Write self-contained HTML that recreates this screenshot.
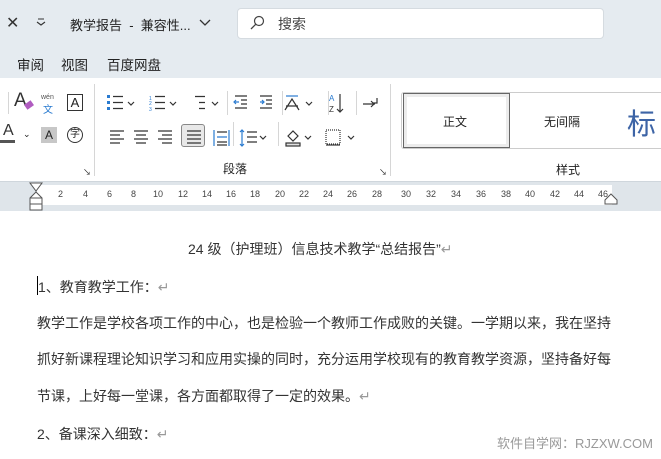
<!DOCTYPE html>
<html><head><meta charset="utf-8"><style>
*{margin:0;padding:0;box-sizing:border-box}
body{width:661px;height:459px;overflow:hidden;background:#fff;font-family:"Liberation Sans","Noto Sans CJK SC",sans-serif;position:relative;color:#222}
.a{position:absolute;white-space:nowrap}
.top{position:absolute;left:0;top:0;width:661px;height:78px;background:#e5ebf0}
.rib{position:absolute;left:0;top:78px;width:661px;height:103px;background:#fff}
.ruler{position:absolute;left:0;top:181px;width:661px;height:30px;background:#dfe5ea;border-top:1px solid #cfd6dc}
.rw{position:absolute;left:37px;top:3px;width:575px;height:20px;background:#fff}
.rn{position:absolute;top:7px;font-size:9px;color:#444}
.doc{font-size:14px;color:#333}
.ic{position:absolute;font-size:14px;color:#333}
.vs{position:absolute;width:1px;background:#d6d6d6}
</style></head><body>
<div class="top"></div>
<div class="a" style="left:6px;top:13px;font-size:16px;color:#333">✕</div>
<svg class="a" style="left:36px;top:18px" width="10" height="8" stroke="#333" stroke-width="1.1" fill="none"><path d="M2 1h6M1 4l4 3 4-3"/></svg>
<div class="a" style="left:70px;top:15px;font-size:13px;color:#222">教学报告 &nbsp;- &nbsp;兼容性...</div>
<svg class="a" style="left:199px;top:19px" width="12" height="8"><path d="M1 1 L6 6 L11 1" fill="none" stroke="#333" stroke-width="1.3"/></svg>
<div class="a" style="left:237px;top:8px;width:367px;height:31px;background:#fff;border:1px solid #d5dbe0;border-radius:4px"></div>
<svg class="a" style="left:249px;top:15px" width="16" height="16"><circle cx="10" cy="6" r="4.5" fill="none" stroke="#444" stroke-width="1.2"/><path d="M7 9 L2 14" stroke="#444" stroke-width="1.3"/></svg>
<div class="a" style="left:278px;top:14px;font-size:14px;color:#444">搜索</div>
<div class="a" style="left:17px;top:54px;font-size:13.5px">审阅</div>
<div class="a" style="left:61px;top:54px;font-size:13.5px">视图</div>
<div class="a" style="left:107px;top:54px;font-size:13.5px">百度网盘</div>
<div class="rib"></div>
<div class="vs" style="left:8px;top:92px;height:22px"></div>
<div class="ic" style="left:14px;top:90px;font-size:19px">A</div>
<div class="a" style="left:25px;top:102px;width:8px;height:6px;background:#b05cc0;transform:rotate(-35deg)"></div>
<div class="a" style="left:41px;top:94px;font-size:7px;color:#555">wén</div>
<div class="a" style="left:43px;top:101px;font-size:10px;color:#2a7bd0">文</div>
<div class="a" style="left:67px;top:94px;width:16px;height:17px;border:1px solid #333;font-size:13px;text-align:center;line-height:15px">A</div>
<div class="ic" style="left:3px;top:122px;font-size:16px">A</div>
<div class="a" style="left:0;top:140px;width:15px;height:3px;background:#555"></div>
<div class="a" style="left:23px;top:129px;font-size:9px">⌄</div>
<div class="a" style="left:41px;top:127px;width:16px;height:16px;background:#c7c7c7;font-size:12px;text-align:center;line-height:16px">A</div>
<div class="a" style="left:67px;top:127px;width:16px;height:16px;border:1px solid #333;border-radius:50%;font-size:10px;text-align:center;line-height:14px">字</div>
<div class="a" style="left:83px;top:167px;font-size:8px">↘</div>
<div class="vs" style="left:94px;top:84px;height:92px"></div>
<svg class="a" style="left:105px;top:92px" width="290" height="60" fill="none" stroke="#333" stroke-width="1.2">
<g fill="#2a7bd0" stroke="none"><rect x="2" y="3" width="3" height="3"/><rect x="2" y="9" width="3" height="3"/><rect x="2" y="15" width="3" height="3"/></g>
<path d="M8 4.5h10M8 10.5h10M8 16.5h10"/><path d="M23 10l3 3 3-3" />
<path d="M50 4.5h10M50 10.5h10M50 16.5h10"/><path d="M65 10l3 3 3-3"/>
<text x="44" y="8" font-size="5" fill="#2a7bd0" stroke="none">1</text><text x="44" y="13" font-size="5" fill="#2a7bd0" stroke="none">2</text><text x="44" y="19" font-size="5" fill="#2a7bd0" stroke="none">3</text>
<path d="M90 4.5h10M94 10.5h6M94 16.5h6"/><path d="M107 10l3 3 3-3"/>
<path d="M130 4h12M136 8h6M136 12h6M130 16h12"/><path d="M134 10h-4M131 8l-2 2 2 2" stroke="#2a7bd0"/>
<path d="M155 4h12M161 8h6M161 12h6M155 16h12"/><path d="M155 10h4M157 8l2 2-2 2" stroke="#2a7bd0"/>
<path d="M180 18l7-11 7 11M181 14h12"/><path d="M181 4h12" stroke="#2a7bd0"/><path d="M201 10l3 3 3-3"/>
<path d="M235 2v18M232 17l3 3 3-3"/>
<text x="224" y="9" font-size="8" fill="#2a7bd0" stroke="none">A</text><text x="224" y="20" font-size="8" fill="#333" stroke="none">Z</text>
<path d="M258 12h12M266 9l3 3-3 3M272 6v5h-4"/>
<path d="M5 39h14M5 43h10M5 47h14M5 51h10"/>
<path d="M29 39h14M31 43h10M29 47h14M31 51h10"/>
<path d="M53 39h14M57 43h10M53 47h14M57 51h10"/>
<path d="M109 38v16M124 38v16M112 45h10" stroke="#2a7bd0"/><path d="M112 40h10M112 50h10M112 53h10"/>
<path d="M137 38v16M135 40l2-2 2 2M135 52l2 2 2-2" stroke="#2a7bd0"/><path d="M142 40h10M142 45h10M142 50h10"/><path d="M155 44l3 3 3-3"/>
<path d="M183 44l5-5 5 5-5 5z"/><rect x="181" y="51" width="14" height="3" fill="#e0e0e0"/><path d="M200 44l3 3 3-3"/>
<path d="M221 38h14v14h-14z" stroke-dasharray="1 1"/><path d="M221 53h14"/><path d="M243 44l3 3 3-3"/>
</svg>
<div class="a" style="left:181px;top:124px;width:24px;height:23px;border:1px solid #888;border-radius:3px;background:#e8e8e8"></div>
<svg class="a" style="left:186px;top:128px" width="16" height="16" stroke="#333" stroke-width="1.2"><path d="M1 3h14M1 7h14M1 11h14M1 15h14"/></svg>
<div class="vs" style="left:227px;top:91px;height:24px"></div>
<div class="vs" style="left:282px;top:91px;height:24px"></div>
<div class="vs" style="left:328px;top:91px;height:24px"></div>
<div class="vs" style="left:356px;top:91px;height:24px"></div>
<div class="vs" style="left:233px;top:122px;height:24px"></div>
<div class="vs" style="left:278px;top:122px;height:24px"></div>
<div class="a" style="left:223px;top:160px;font-size:12px">段落</div>
<div class="a" style="left:379px;top:167px;font-size:8px">↘</div>
<div class="vs" style="left:390px;top:84px;height:92px"></div>
<div class="a" style="left:401px;top:92px;width:260px;height:57px;border:1px solid #ccc;border-right:none;border-radius:3px 0 0 3px"></div>
<div class="a" style="left:403px;top:93px;width:107px;height:55px;border:1px solid #666;background:#fff;box-shadow:inset 0 0 0 3px #ececec"></div>
<div class="a" style="left:443px;top:113px;font-size:12px">正文</div>
<div class="a" style="left:544px;top:113px;font-size:12px">无间隔</div>
<div class="a" style="left:627px;top:101px;font-size:29px;color:#3d64a6">标</div>
<div class="a" style="left:556px;top:161px;font-size:12px">样式</div>
<div class="ruler"><div class="rw"></div>
<span class="rn" style="left:58px">2</span><span class="rn" style="left:83px">4</span><span class="rn" style="left:107px">6</span><span class="rn" style="left:131px">8</span><span class="rn" style="left:153px">10</span><span class="rn" style="left:178px">12</span><span class="rn" style="left:202px">14</span><span class="rn" style="left:226px">16</span><span class="rn" style="left:250px">18</span><span class="rn" style="left:275px">20</span><span class="rn" style="left:299px">22</span><span class="rn" style="left:323px">24</span><span class="rn" style="left:347px">26</span><span class="rn" style="left:372px">28</span><span class="rn" style="left:401px">30</span><span class="rn" style="left:426px">32</span><span class="rn" style="left:451px">34</span><span class="rn" style="left:476px">36</span><span class="rn" style="left:501px">38</span><span class="rn" style="left:525px">40</span><span class="rn" style="left:550px">42</span><span class="rn" style="left:574px">44</span><span class="rn" style="left:598px">46</span>
</div>
<svg class="a" style="left:29px;top:182px" width="14" height="30" fill="#fff" stroke="#555"><path d="M1 1h12L7 9z"/><path d="M7 10l6 6v6H1v-6z"/><path d="M1 16h12"/><rect x="1" y="22" width="12" height="6"/></svg>
<svg class="a" style="left:604px;top:193px" width="14" height="12" fill="#fff" stroke="#555"><path d="M7 1l6 6v4H1V7z"/></svg>
<div class="a doc" style="left:188px;top:239px">24 级（护理班）信息技术教学“总结报告”<span style="color:#999">↵</span></div>
<div class="a" style="left:37px;top:276px;width:1px;height:19px;background:#000"></div>
<div class="a doc" style="left:38px;top:277px">1、教育教学工作：<span style="color:#999">↵</span></div>
<div class="a doc" style="left:37px;top:313px">教学工作是学校各项工作的中心，也是检验一个教师工作成败的关键。一学期以来，我在坚持</div>
<div class="a doc" style="left:37px;top:349px">抓好新课程理论知识学习和应用实操的同时，充分运用学校现有的教育教学资源，坚持备好每</div>
<div class="a doc" style="left:37px;top:386px">节课，上好每一堂课，各方面都取得了一定的效果。<span style="color:#999">↵</span></div>
<div class="a doc" style="left:37px;top:424px">2、备课深入细致：<span style="color:#999">↵</span></div>
<div class="a" style="left:497px;top:433px;font-size:13px;color:#999">软件自学网：RJZXW.COM</div>
</body></html>
